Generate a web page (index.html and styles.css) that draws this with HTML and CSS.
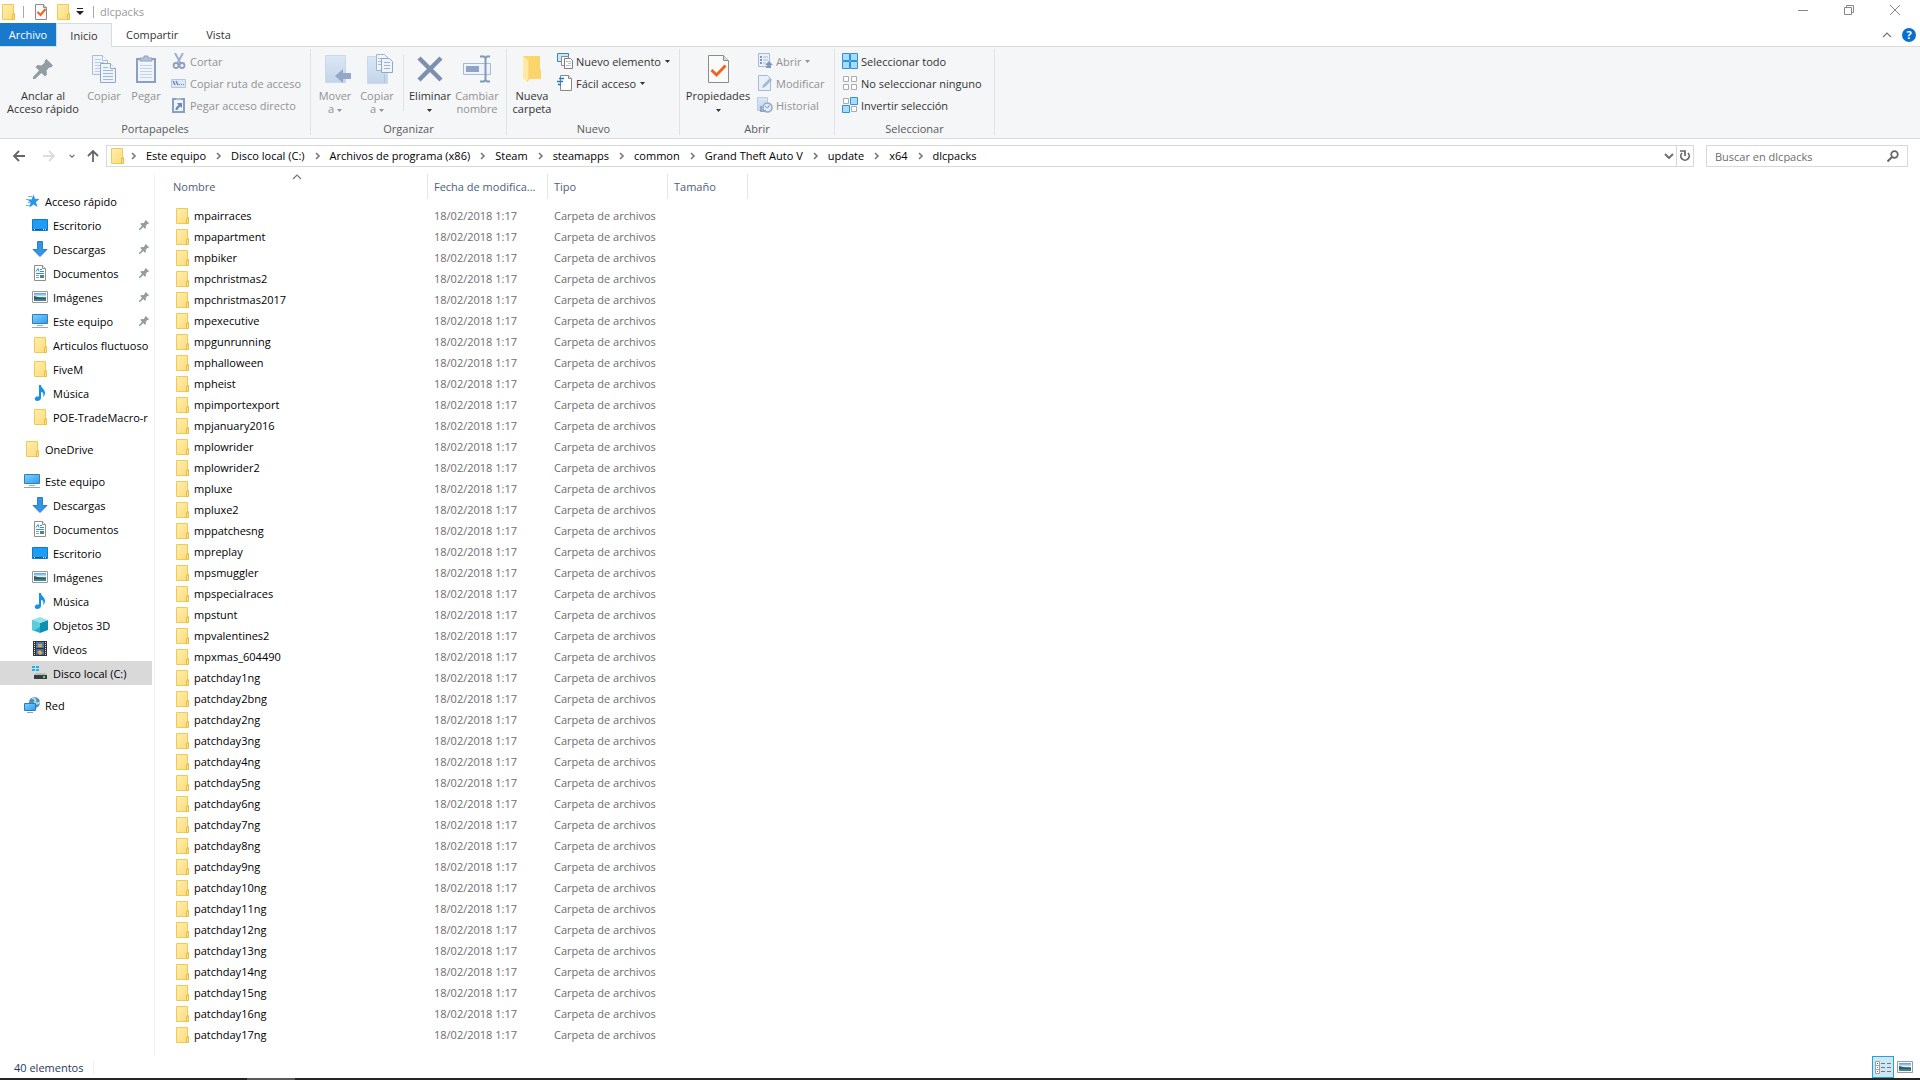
FILE: index.html
```html
<!DOCTYPE html>
<html lang="es">
<head>
  <meta charset="UTF-8">
  <title>dlcpacks</title>
  <link rel="stylesheet" href="styles.css">
</head>
<body>
<svg class="sprite" aria-hidden="true">
  <linearGradient id="g-folder" x1="0" y1="0" x2="1" y2="1"><stop offset="0" stop-color="#ffeeb0"/><stop offset="1" stop-color="#fcdc7c"/></linearGradient>
  <linearGradient id="g-screen" x1="0" y1="0" x2="1" y2="1"><stop offset="0" stop-color="#7cd0ff"/><stop offset="1" stop-color="#2b9df4"/></linearGradient>
  <linearGradient id="g-photo" x1="0" y1="0" x2="0" y2="1"><stop offset="0" stop-color="#4f9be8"/><stop offset=".45" stop-color="#e4f3fd"/><stop offset=".6" stop-color="#3c6b62"/><stop offset="1" stop-color="#4389b8"/></linearGradient>
  <linearGradient id="g-blue" x1="0" y1="0" x2="0" y2="1"><stop offset="0" stop-color="#dbe7f5"/><stop offset="1" stop-color="#c3d4ea"/></linearGradient>

  <symbol id="folder" viewBox="0 0 16 16">
    <path d="M2.5.5h11v15h-11z" fill="url(#g-folder)" stroke="#f0cb54"/>
    <path d="M12.5 15.5v-5h1v-1h1v6z" fill="#ffe494" stroke="#e8bd3f"/>
  </symbol>
  <symbol id="check" viewBox="0 0 12 16">
    <path d="M.5.5h8l3 3v12H.5z" fill="#fafafa" stroke="#8c8c8c"/><path d="M8.5.5v3h3" fill="#ddd" stroke="#8c8c8c"/>
    <path d="M2.500 8l3 3 5-6" fill="none" stroke="#f4601e" stroke-width="2"/>
  </symbol>
  <symbol id="props" viewBox="0 0 21 28">
    <path d="M.5.5h15l5 5v22H.5z" fill="#fafafa" stroke="#8c8c8c"/><path d="M15.5.5v5h5" fill="#ddd" stroke="#8c8c8c"/>
    <path d="M3.500 15l5 5 9-9.500" fill="none" stroke="#f4601e" stroke-width="2.800"/>
  </symbol>
  <symbol id="caret" viewBox="0 0 5 3"><path d="M0 0h5L2.500 3z" fill="currentColor"/></symbol>
  <symbol id="qat" viewBox="0 0 8 8"><path d="M1 0h6v1H1zM0 3h8L4 7z" fill="#222"/></symbol>
  <symbol id="chev" viewBox="0 0 6 8"><path d="M1 1l3 3-3 3" fill="none" stroke="#777" stroke-width="1.600"/></symbol>
  <symbol id="up" viewBox="0 0 10 6"><path d="M1 5l4-4 4 4" fill="none" stroke="#777" stroke-width="1.200"/></symbol>
  <symbol id="down" viewBox="0 0 10 6"><path d="M1 1l4 4 4-4" fill="none" stroke="#707070" stroke-width="2"/></symbol>
  <symbol id="arrow" viewBox="0 0 14 12"><path d="M13 6H2M7 1L2 6l5 5" fill="none" stroke="currentColor" stroke-width="1.800"/></symbol>

  <symbol id="pin" viewBox="0 0 20 20">
    <path d="M13.500 0L20 6.500 18 8.500l-1.500-.3-3 3.300.5 4-2 2-3.500-3.500L2 20H0v-2l6-6.500L2.500 8l2-2 4 .5 3.300-3-.3-1.500z" fill="#949ca3"/>
  </symbol>
  <symbol id="copy" viewBox="0 0 24 28">
    <path d="M.5.5h10l5 5v14H.5z" fill="#eef4fb" stroke="#abbcd4"/><path d="M10.5.5v5h5" fill="#fff" stroke="#abbcd4"/>
    <path d="M3 4.500h6M3 7.500h9M3 10.500h9M3 13.500h9M3 16.500h9" stroke="#bccbe0"/>
    <path d="M8.500 8.500h10l5 5v14h-15z" fill="#eef4fb" stroke="#92a7c6"/><path d="M18.500 8.500v5h5" fill="#fff" stroke="#92a7c6"/>
    <path d="M11 12.500h5M11 15.500h10M11 18.500h10M11 21.500h10M11 24.500h10" stroke="#a3b7d3"/>
  </symbol>
  <symbol id="paste" viewBox="0 0 20 28">
    <path d="M1 4h18v23H1z" fill="#eff5fb" stroke="#8a9fc4" stroke-width="2"/>
    <path d="M4 6V3h4V1h4v2h4v3z" fill="#b5c3d9" stroke="#8fa2c0"/>
    <path d="M4 10.500h12M4 13.500h12M4 16.500h12M4 19.500h12M4 22.500h12" stroke="#c3d1e5"/>
  </symbol>
  <symbol id="cut" viewBox="0 0 16 16">
    <path d="M4 0l5.500 10M12 0L6.500 10" stroke="#9fb0c9" stroke-width="2"/>
    <circle cx="5" cy="12.500" r="2.500" fill="none" stroke="#8c9fbe" stroke-width="1.800"/><circle cx="11" cy="12.500" r="2.500" fill="none" stroke="#8c9fbe" stroke-width="1.800"/>
  </symbol>
  <symbol id="path" viewBox="0 0 16 16">
    <path d="M.5 4.500h14v8H.5z" fill="#dce8f6" stroke="#b7c6dc"/><path d="M2 6l2 4M5 6l2 4" stroke="#6e87b1" stroke-width="1.400"/><path d="M8 9h1v1H8zM10 9h1v1h-1zM12 9h1v1h-1z" fill="#6e87b1"/>
  </symbol>
  <symbol id="shortcut" viewBox="0 0 16 16">
    <path d="M2 2h11v13H2z" fill="#eef4fb" stroke="#8a9fc4" stroke-width="2"/><path d="M5 3V1h5v2z" fill="#a9b9d2"/>
    <path d="M6 6h5v5L9.500 9.500C8 10.500 7 11.500 6.500 13h-2c0-2 1-3.500 3-5z" fill="#7189b4"/>
  </symbol>
  <symbol id="move" viewBox="-6 0 34 30">
    <path d="M1.500 1.500h20v27h-20z" fill="url(#g-blue)" stroke="#c9d8eb"/><path d="M18.500 28v-9" stroke="#b3c6df"/>
    <path d="M11 22l8-7v4h8v6h-8v4z" fill="#94a7c7"/>
  </symbol>
  <symbol id="copyto" viewBox="-6 0 34 32">
    <path d="M1.500 3.500h20v27h-20z" fill="url(#g-blue)" stroke="#c9d8eb"/><path d="M18.500 30v-9" stroke="#b3c6df"/>
    <path d="M10.500 1.500h8l3 3v13h-11z" fill="#eef4fb" stroke="#a3b5d0"/><path d="M12 5.500h6M12 8.500h6M12 11.500h6" stroke="#a9bbd5"/>
    <path d="M15.500 5.500h8l3 3v11h-11z" fill="#eef4fb" stroke="#93a7c6"/><path d="M18 9.500h6M18 12.500h6M18 15.500h6" stroke="#9fb3d0"/>
  </symbol>
  <symbol id="delete" viewBox="0 0 26 26"><path d="M2 2l22 22M24 2L2 24" stroke="#7d8fae" stroke-width="4.500"/></symbol>
  <symbol id="rename" viewBox="0 0 28 28">
    <path d="M.5 8.500h27v11H.5z" fill="#eef4fb" stroke="#a7b9d3"/><path d="M3 11h13v6H3z" fill="#8ea3c5"/>
    <path d="M17 1.500h4l1.500 1.500L24 1.500h3M17 26.500h4l1.500-1.500 1.500 1.500h3M22.500 3v22" fill="none" stroke="#8398bb" stroke-width="2"/>
  </symbol>
  <symbol id="newfolder" viewBox="0 0 20 28">
    <path d="M1 1h17v13l1 1v9H1z" fill="#fbd56a"/><path d="M1 1l6 5v20l-2 1-4-4z" fill="#ffe9a5"/><path d="M5 26l2-2V6" fill="none" stroke="#f4cf6a"/>
  </symbol>
  <symbol id="newitem" viewBox="0 0 16 16">
    <path d="M.5.5h11v8H.5z" fill="#cbe8fa" stroke="#3d87a9"/><path d="M4.500 3.500h7v9h-7z" fill="#fff" stroke="#8b8b8b"/>
    <path d="M7.500 5.500h6l2 2v8h-8z" fill="#fff" stroke="#7e7e7e"/><path d="M9 8.500h2M9 12.500h2" stroke="#f19999"/><path d="M11 8.500h3M11 10.500h3M11 12.500h3" stroke="#a6c7e7"/>
  </symbol>
  <symbol id="easy" viewBox="0 0 16 16">
    <path d="M3.500.5h8l3 3v12h-11z" fill="#fff" stroke="#888"/><path d="M11.500.5v3h3" fill="#eee" stroke="#888"/><path d="M2 3.500h5M0 6.500h6M1 9.500h3" stroke="#1e7ac6" stroke-width="1.400"/>
  </symbol>
  <symbol id="open" viewBox="0 0 16 16">
    <path d="M1.500.5h11v13h-11z" fill="#eaf1fa" stroke="#a9bad3"/><path d="M3 3h2v2H3zM3 6h2v2H3zM3 9h2v2H3z" fill="#7f95bd"/><path d="M6 4h5M6 7h5M6 10h3" stroke="#a9bad3"/>
    <path d="M8 12l4-4 4 4h-2v3H9v-2h1v-1z" fill="#8398bd"/>
  </symbol>
  <symbol id="edit" viewBox="0 0 16 16">
    <path d="M1.500.5h9l3 3v12h-12z" fill="#e8f0fa" stroke="#a9bad3"/><path d="M5 13l1-3 7-7 2 2-7 7z" fill="#a5b8d5"/>
  </symbol>
  <symbol id="history" viewBox="0 0 16 16">
    <path d="M.5.5h10v13H.5z" fill="url(#g-blue)" stroke="#bccde4"/><circle cx="10.500" cy="10.500" r="4.500" fill="#e2ebf7" stroke="#92a6c7" stroke-width="1.500"/>
    <path d="M8 9l2.500 2L13 7.500" fill="none" stroke="#8197bd"/><path d="M4 9v5h5" fill="none" stroke="#92a6c7" stroke-width="2"/>
  </symbol>
  <symbol id="selall" viewBox="0 0 16 16"><path d="M.5.5h7v7h-7zM8.5.5h7v7h-7zM.5 8.500h7v7h-7zM8.500 8.500h7v7h-7z" fill="#a9dcfb" stroke="#2d91e0"/></symbol>
  <symbol id="selnone" viewBox="0 0 16 16"><path d="M1.500 1.500h5v5h-5zM9.500 1.500h5v5h-5zM1.500 9.500h5v5h-5zM9.500 9.500h5v5h-5z" fill="#fff" stroke="#aaa"/></symbol>
  <symbol id="selinv" viewBox="0 0 16 16"><path d="M1.500 1.500h5v5h-5zM9.500 9.500h5v5h-5z" fill="#fff" stroke="#aaa"/><path d="M8.5.5h7v7h-7zM.5 8.500h7v7h-7z" fill="#a9dcfb" stroke="#2d91e0"/></symbol>

  <symbol id="star" viewBox="0 0 16 16">
    <path d="M9.500 1.500l1.500 4.200 4.500.3-3.500 3 1.500 5-4-2.500-4 3 1-5-3-3h4z" fill="#2d97e5"/><path d="M4 3.500h4M2 6.500h4M4 9.500h3M2 12.500h4" stroke="#69b9f0"/>
  </symbol>
  <symbol id="desktop" viewBox="0 0 16 16"><path d="M.5 2.500h15v11H.5z" fill="#1c9dfa" stroke="#1479c4"/><path d="M1 12.500h14" stroke="#12588f"/><path d="M2 12.500h1M11 12.500h1M13 12.500h1" stroke="#fff"/></symbol>
  <symbol id="downloads" viewBox="0 0 16 16"><path d="M5.5.5h5v8h4.500L8 15.500 1 8.500h4.500z" fill="#3393e6" stroke="#2b80cd"/></symbol>
  <symbol id="docs" viewBox="0 0 16 16">
    <path d="M2.5.5h8l3 3v12h-11z" fill="#fff" stroke="#8f8f8f"/><path d="M10.5.5v3h3" fill="#eee" stroke="#8f8f8f"/>
    <path d="M4 6.500l2-3 1 3M8 4.500h2M8 6.500h4M4 8.500h8" fill="none" stroke="#3291d8"/><path d="M4 10.500h3M4 12.500h3" stroke="#999"/><path d="M8 10h4v3H8z" fill="#4683a1"/>
  </symbol>
  <symbol id="images" viewBox="0 0 16 16"><path d="M.5 2.500h15v11H.5z" fill="#fff" stroke="#9a9a9a"/><path d="M2 4h12v8H2z" fill="url(#g-photo)"/><path d="M2 7c4 1 7 2 12 2v1H2z" fill="#2f5e50"/></symbol>
  <symbol id="pc" viewBox="0 0 16 16"><path d="M.5 1.500h15v9H.5z" fill="url(#g-screen)" stroke="#3b7da9"/><path d="M5 12.500h6" stroke="#8bb4cd"/><path d="M0 14.500h16" stroke="#99a5b3"/></symbol>
  <symbol id="music" viewBox="0 0 16 16"><path d="M7 0h2c0 3 4 4 4 8 0 2-1 3-2 4 1-3 0-5-2-5v6c0 2-2 3-4 3-3 0-3-4 0-4.500 1-.2 2 0 2 0z" fill="#1593ea"/></symbol>
  <symbol id="cube" viewBox="0 0 16 16"><path d="M0 3l8 3v10l-8-3z" fill="#21b1c7"/><path d="M16 3L8 6v10l8-3z" fill="#0f90b1"/><path d="M0 3l8-3 8 3-8 3z" fill="#92e3ec"/><path d="M0 3l8 3v4l-6 3.500-2-.5z" fill="#5cccdb"/></symbol>
  <symbol id="video" viewBox="0 0 16 16"><path d="M1 0h14v15H1z" fill="#303030"/><path d="M4 1h8v6H4z" fill="#5274ba"/><path d="M4 8h8v6H4z" fill="#3e66b2"/><path d="M6 3h4v3H6z" fill="#d8a935"/><path d="M5 11l3-2 3 3-3 2z" fill="#dbb23d"/><path d="M2.500 1v14M13.500 1v14" stroke="#eee" stroke-dasharray="1 1"/></symbol>
  <symbol id="drive" viewBox="0 0 16 16"><path d="M0 1h3v2H0zM4 1h3v2H4zM0 4h3v2H0zM4 4h3v2H4z" fill="#19b3ea"/><path d="M4 8h9l2 2H2z" fill="#b9bcbd"/><path d="M2 10h13v4H2z" fill="#393c3e"/><path d="M11 11h2v2h-2z" fill="#4be36a"/></symbol>
  <symbol id="net" viewBox="0 0 16 16"><circle cx="10.500" cy="5.500" r="5.500" fill="#4f91b8"/><path d="M8 1c3 0 4 2 3 4s3 2 5 0" fill="none" stroke="#b5d9e6" stroke-width="2"/><path d="M.5 6.500h11v7H.5z" fill="url(#g-screen)" stroke="#2c7cb6"/><path d="M3 15.500h6" stroke="#8fa5b5"/></symbol>
</svg>

<header class="titlebar">
  <svg class="icon"><use href="#folder"/></svg>
  <span class="bar"></span>
  <button class="qat-btn" aria-label="Propiedades"><svg width="12" height="16"><use href="#check"/></svg></button>
  <button class="qat-btn" aria-label="Nueva carpeta"><svg class="icon"><use href="#folder"/></svg></button>
  <button class="qat-btn qat-more" aria-label="Personalizar"><svg width="8" height="8"><use href="#qat"/></svg></button>
  <span class="bar"></span>
  <h1>dlcpacks</h1>
  <div class="window-btns">
    <button aria-label="Minimizar"><svg width="10" height="10"><path d="M0 5.500h10" stroke="#888"/></svg></button>
    <button aria-label="Restaurar"><svg width="10" height="10"><path d="M.5 2.500h7v7h-7zM2.500 2V.5h7v7H8" fill="none" stroke="#888"/></svg></button>
    <button aria-label="Cerrar"><svg width="10" height="10"><path d="M0 0l10 10M10 0L0 10" stroke="#888"/></svg></button>
  </div>
</header>

<nav class="tabs">
  <button class="tab tab-file">Archivo</button>
  <button class="tab active">Inicio</button>
  <button class="tab">Compartir</button>
  <button class="tab">Vista</button>
  <div class="tab-tools">
    <button aria-label="Minimizar la cinta"><svg width="10" height="6"><use href="#up"/></svg></button>
    <button class="help">?</button>
  </div>
</nav>

<section class="ribbon">
  <div class="group g-clipboard">
    <div class="tools">
      <button class="big pin-btn"><svg width="20" height="20"><use href="#pin"/></svg><span>Anclar al<br>Acceso rápido</span></button>
      <button class="big" disabled><svg width="24" height="28"><use href="#copy"/></svg><span>Copiar</span></button>
      <button class="big" disabled><svg width="20" height="28"><use href="#paste"/></svg><span>Pegar</span></button>
      <div class="stack">
        <button disabled><svg class="icon"><use href="#cut"/></svg>Cortar</button>
        <button disabled><svg class="icon"><use href="#path"/></svg>Copiar ruta de acceso</button>
        <button disabled><svg class="icon"><use href="#shortcut"/></svg>Pegar acceso directo</button>
      </div>
    </div>
    <h2>Portapapeles</h2>
  </div>
  <div class="group g-organize">
    <div class="tools">
      <button class="big" disabled><svg width="34" height="30"><use href="#move"/></svg><span>Mover<br>a <svg class="caret"><use href="#caret"/></svg></span></button>
      <button class="big" disabled><svg width="34" height="32"><use href="#copyto"/></svg><span>Copiar<br>a <svg class="caret"><use href="#caret"/></svg></span></button>
      <i class="divider"></i>
      <button class="big"><svg width="26" height="26"><use href="#delete"/></svg><span>Eliminar<br><svg class="caret"><use href="#caret"/></svg></span></button>
      <button class="big wide" disabled><svg width="28" height="28"><use href="#rename"/></svg><span>Cambiar<br>nombre</span></button>
    </div>
    <h2>Organizar</h2>
  </div>
  <div class="group g-new">
    <div class="tools">
      <button class="big"><svg width="20" height="28"><use href="#newfolder"/></svg><span>Nueva<br>carpeta</span></button>
      <div class="stack">
        <button><svg class="icon"><use href="#newitem"/></svg>Nuevo elemento<svg class="caret"><use href="#caret"/></svg></button>
        <button><svg class="icon"><use href="#easy"/></svg>Fácil acceso<svg class="caret"><use href="#caret"/></svg></button>
      </div>
    </div>
    <h2>Nuevo</h2>
  </div>
  <div class="group g-open">
    <div class="tools">
      <button class="big props-btn"><svg width="21" height="28"><use href="#props"/></svg><span>Propiedades<br><svg class="caret"><use href="#caret"/></svg></span></button>
      <div class="stack">
        <button disabled><svg class="icon"><use href="#open"/></svg>Abrir<svg class="caret"><use href="#caret"/></svg></button>
        <button disabled><svg class="icon"><use href="#edit"/></svg>Modificar</button>
        <button disabled><svg class="icon"><use href="#history"/></svg>Historial</button>
      </div>
    </div>
    <h2>Abrir</h2>
  </div>
  <div class="group g-select">
    <div class="tools">
      <div class="stack">
        <button><svg class="icon"><use href="#selall"/></svg>Seleccionar todo</button>
        <button><svg class="icon"><use href="#selnone"/></svg>No seleccionar ninguno</button>
        <button><svg class="icon"><use href="#selinv"/></svg>Invertir selección</button>
      </div>
    </div>
    <h2>Seleccionar</h2>
  </div>
</section>

<div class="address-row">
  <div class="nav-btns">
    <button class="nav-btn" aria-label="Atrás"><svg width="14" height="12"><use href="#arrow"/></svg></button>
    <button class="nav-btn" aria-label="Adelante" disabled><svg class="flip" width="14" height="12"><use href="#arrow"/></svg></button>
    <button class="nav-small" aria-label="Recientes"><svg width="6" height="4"><use href="#down"/></svg></button>
    <button class="nav-up" aria-label="Subir"><svg class="turn" width="14" height="12"><use href="#arrow"/></svg></button>
  </div>
  <div class="address">
    <svg class="icon"><use href="#folder"/></svg>
    <div class="crumbs" id="crumbs"></div>
    <button class="addr-drop" aria-label="Ubicaciones anteriores"><svg width="10" height="6"><use href="#down"/></svg></button>
    <button class="refresh" aria-label="Actualizar"><svg width="12" height="12"><path d="M3 3a4.200 4.200 0 1 0 6 0" fill="none" stroke="#666" stroke-width="1.700"/><path d="M1 1h5v5" fill="none" stroke="#666" stroke-width="1.700"/></svg></button>
  </div>
  <label class="search">
    <input type="text" placeholder="Buscar en dlcpacks" aria-label="Buscar en dlcpacks">
    <svg width="12" height="12"><circle cx="7.500" cy="4.500" r="3.300" fill="none" stroke="#666" stroke-width="1.700"/><path d="M5 7l-4.500 4.500" stroke="#666" stroke-width="2"/></svg>
  </label>
</div>

<main>
  <aside class="sidebar">
    <ul>
      <li><a class="root" href="#"><svg class="icon"><use href="#star"/></svg><span>Acceso rápido</span></a></li>
      <li><a href="#"><svg class="icon"><use href="#desktop"/></svg><span>Escritorio</span><svg class="pin"><use href="#pin"/></svg></a></li>
      <li><a href="#"><svg class="icon"><use href="#downloads"/></svg><span>Descargas</span><svg class="pin"><use href="#pin"/></svg></a></li>
      <li><a href="#"><svg class="icon"><use href="#docs"/></svg><span>Documentos</span><svg class="pin"><use href="#pin"/></svg></a></li>
      <li><a href="#"><svg class="icon"><use href="#images"/></svg><span>Imágenes</span><svg class="pin"><use href="#pin"/></svg></a></li>
      <li><a href="#"><svg class="icon"><use href="#pc"/></svg><span>Este equipo</span><svg class="pin"><use href="#pin"/></svg></a></li>
      <li><a href="#"><svg class="icon"><use href="#folder"/></svg><span>Articulos fluctuoso</span></a></li>
      <li><a href="#"><svg class="icon"><use href="#folder"/></svg><span>FiveM</span></a></li>
      <li><a href="#"><svg class="icon"><use href="#music"/></svg><span>Música</span></a></li>
      <li><a href="#"><svg class="icon"><use href="#folder"/></svg><span>POE-TradeMacro-r</span></a></li>
    </ul>
    <ul>
      <li><a class="root" href="#"><svg class="icon"><use href="#folder"/></svg><span>OneDrive</span></a></li>
    </ul>
    <ul>
      <li><a class="root" href="#"><svg class="icon"><use href="#pc"/></svg><span>Este equipo</span></a></li>
      <li><a href="#"><svg class="icon"><use href="#downloads"/></svg><span>Descargas</span></a></li>
      <li><a href="#"><svg class="icon"><use href="#docs"/></svg><span>Documentos</span></a></li>
      <li><a href="#"><svg class="icon"><use href="#desktop"/></svg><span>Escritorio</span></a></li>
      <li><a href="#"><svg class="icon"><use href="#images"/></svg><span>Imágenes</span></a></li>
      <li><a href="#"><svg class="icon"><use href="#music"/></svg><span>Música</span></a></li>
      <li><a href="#"><svg class="icon"><use href="#cube"/></svg><span>Objetos 3D</span></a></li>
      <li><a href="#"><svg class="icon"><use href="#video"/></svg><span>Vídeos</span></a></li>
      <li><a class="selected" href="#"><svg class="icon"><use href="#drive"/></svg><span>Disco local (C:)</span></a></li>
    </ul>
    <ul>
      <li><a class="root" href="#"><svg class="icon"><use href="#net"/></svg><span>Red</span></a></li>
    </ul>
  </aside>

  <div class="files">
    <table>
      <colgroup><col class="c-name"><col class="c-date"><col class="c-type"><col class="c-size"></colgroup>
      <thead>
        <tr>
          <th>Nombre<svg class="sort" width="10" height="6"><use href="#up"/></svg></th>
          <th>Fecha de modifica...</th>
          <th>Tipo</th>
          <th>Tamaño</th>
        </tr>
      </thead>
      <tbody id="rows"></tbody>
    </table>
  </div>
</main>

<footer class="status">
  <span class="count">40 elementos</span>
  <div class="views">
    <button class="active" aria-label="Detalles"><svg width="16" height="13"><path d="M.5.5h4v4h-4zM.5 4.500h4v4h-4zM.5 8.500h4v4h-4z" fill="#fff" stroke="#a0a0a0"/><path d="M6 2.500h4M12 2.500h4M6 6.500h4M12 6.500h4M6 10.500h4M12 10.500h4" stroke="#777"/><path d="M2 2h1v1H2z" fill="#555"/><path d="M2 6h1v1H2z" fill="#48f"/><path d="M2 10h1v1H2z" fill="#c33"/></svg></button>
    <button aria-label="Iconos grandes"><svg width="16" height="16"><use href="#images"/></svg></button>
  </div>
</footer>
<div class="taskbar"><span></span></div>

<script>
  const crumbs = ['Este equipo', 'Disco local (C:)', 'Archivos de programa (x86)', 'Steam', 'steamapps',
    'common', 'Grand Theft Auto V', 'update', 'x64', 'dlcpacks'];
  const names = ['mpairraces', 'mpapartment', 'mpbiker', 'mpchristmas2', 'mpchristmas2017', 'mpexecutive',
    'mpgunrunning', 'mphalloween', 'mpheist', 'mpimportexport', 'mpjanuary2016', 'mplowrider', 'mplowrider2',
    'mpluxe', 'mpluxe2', 'mppatchesng', 'mpreplay', 'mpsmuggler', 'mpspecialraces', 'mpstunt', 'mpvalentines2',
    'mpxmas_604490', 'patchday1ng', 'patchday2bng'];
  for (let i = 2; i <= 17; i++) names.push('patchday' + i + 'ng');

  document.getElementById('crumbs').innerHTML = crumbs.map(c =>
    `<svg class="chev"><use href="#chev"/></svg><a href="#">${c}</a>`).join('');

  document.getElementById('rows').innerHTML = names.map(n => `
    <tr>
      <td><a class="file" href="#"><svg class="icon"><use href="#folder"/></svg>${n}</a></td>
      <td>18/02/2018 1:17</td>
      <td>Carpeta de archivos</td>
      <td></td>
    </tr>`).join('');
</script>
</body>
</html>
```
FILE: styles.css
```css
* {
  box-sizing: border-box;
}
body {
  margin: 0;
  min-height: 100vh;
  display: flex;
  flex-direction: column;
  background: #fff;
  color: #000;
  font-family: "Open Sans", "Noto Sans", sans-serif;
  font-size: 11px;
  line-height: 13px;
}
button, input {
  font: inherit;
  color: inherit;
  background: none;
  border: 0;
  padding: 0;
  margin: 0;
}
h1, h2 {
  margin: 0;
  font-size: 11px;
  font-weight: normal;
}
a {
  color: inherit;
  text-decoration: none;
}
ul {
  list-style: none;
  margin: 0;
  padding: 0;
}
svg {
  display: block;
  flex-shrink: 0;
}
.sprite {
  position: absolute;
  width: 0;
  height: 0;
}
.icon {
  width: 16px;
  height: 16px;
}
.caret {
  width: 5px;
  height: 3px;
}

/* title bar */
.titlebar {
  display: flex;
  align-items: center;
  height: 23px;
}
.bar {
  width: 1px;
  height: 12px;
  margin: 0 6px 0 7px;
  background: #aaa;
}
.qat-btn {
  display: flex;
  justify-content: center;
  width: 22px;
}
.qat-more {
  width: 12px;
}
.titlebar h1 {
  color: #999;
}
.window-btns {
  display: flex;
  align-self: flex-start;
  margin-left: auto;
  padding-right: 2px;
}
.window-btns button {
  display: flex;
  align-items: center;
  justify-content: center;
  width: 46px;
  height: 20px;
}

/* tabs */
.tabs {
  display: flex;
  height: 24px;
  border-bottom: 1px solid #dadbdc;
  color: #333;
}
.tab {
  padding: 0 14px;
}
.tab-file {
  width: 56px;
  padding: 0;
  background: #1979ca;
  color: #fff;
}
.tab.active {
  width: 56px;
  height: 24px;
  padding: 0;
  background: #f5f6f7;
  border: 1px solid #dadbdc;
  border-bottom: 0;
}
.tab-tools {
  display: flex;
  align-items: center;
  gap: 10px;
  margin-left: auto;
  padding-right: 4px;
}
.help {
  width: 14px;
  height: 14px;
  border-radius: 50%;
  background: #0b6fd0;
  color: #fff;
  font-weight: bold;
}

/* ribbon */
.ribbon {
  display: flex;
  height: 92px;
  padding: 2px 0 3px;
  background: #f5f6f7;
  border-bottom: 1px solid #dadbdc;
  color: #333;
}
.group {
  display: flex;
  flex-direction: column;
  justify-content: space-between;
  padding: 0 3px;
  border-right: 1px solid #e1e2e3;
}
.group h2 {
  color: #5a5a5a;
  text-align: center;
}
.g-clipboard { width: 311px; }
.g-organize { width: 196px; }
.g-new {
  width: 173px;
  padding-left: 4px;
}
.g-open { width: 155px; }
.g-select { width: 160px; }
.tools {
  display: flex;
}
.big {
  display: flex;
  flex-direction: column;
  align-items: center;
  width: 42px;
  height: 68px;
  white-space: nowrap;
}
.big > svg {
  margin: auto;
}
.big > span {
  height: 28px;
}
.big .caret {
  display: inline-block;
  vertical-align: middle;
}
.wide { width: 52px; }
.pin-btn { width: 80px; }
.props-btn { width: 70px; }
button:disabled {
  color: #929292;
}
.divider {
  width: 1px;
  height: 56px;
  margin: 6px 5px 0;
  background: #e1e2e3;
}
.stack {
  display: flex;
  flex-direction: column;
  padding: 1px 0 0 4px;
}
.stack button {
  display: flex;
  align-items: center;
  gap: 3px;
  height: 22px;
  white-space: nowrap;
}
.stack .caret {
  margin-left: 1px;
}

/* address */
.address-row {
  display: flex;
  align-items: center;
  height: 34px;
  padding-right: 12px;
}
.nav-btns {
  display: flex;
  align-items: center;
  width: 106px;
  padding-left: 4px;
  color: #666;
}
.nav-btns button {
  display: flex;
  justify-content: center;
}
.nav-btn { width: 30px; }
.nav-small { width: 16px; }
.nav-up { width: 26px; }
.nav-btns button:disabled { color: #ddd; }
.flip { transform: scaleX(-1); }
.turn { transform: rotate(90deg); }
.address, .search {
  display: flex;
  align-items: center;
  height: 22px;
  border: 1px solid #d9d9d9;
}
.address {
  flex: 1;
  padding-left: 2px;
}
.crumbs {
  display: flex;
  align-items: center;
  flex: 1;
  padding-bottom: 1px;
}
.chev {
  width: 6px;
  height: 8px;
  margin: 0 9px 0 10px;
}
.chev:first-child {
  margin-left: 6px;
}
.addr-drop {
  padding: 0 2px;
}
.refresh {
  display: flex;
  align-items: center;
  justify-content: center;
  width: 17px;
  height: 20px;
  border-left: 1px solid #d9d9d9;
}
.search {
  width: 202px;
  margin-left: 12px;
  padding: 0 8px;
}
.search input {
  flex: 1;
  min-width: 0;
  outline: none;
}
.search input::placeholder {
  color: #6d6d6d;
  opacity: 1;
}

/* content */
main {
  display: flex;
  flex: 1;
}
.sidebar {
  width: 155px;
  margin-top: 1px;
  padding: 15px 2px 0 0;
  border-right: 1px solid #f2f2f2;
}
.sidebar ul {
  margin-bottom: 8px;
}
.sidebar a {
  display: flex;
  align-items: center;
  gap: 5px;
  height: 24px;
  padding-left: 32px;
  overflow: hidden;
  white-space: nowrap;
}
.sidebar .root {
  padding-left: 24px;
}
.sidebar .selected {
  background: #d9d9d9;
}
.sidebar .pin {
  width: 10px;
  height: 10px;
  margin-left: auto;
  margin-right: 3px;
}
.files {
  flex: 1;
  padding: 1px 0 0 12px;
}
table {
  width: 581px;
  table-layout: fixed;
  border-spacing: 0;
}
.c-name { width: 261px; }
.c-date { width: 120px; }
.c-type { width: 120px; }
.c-size { width: 80px; }
th {
  position: relative;
  height: 25px;
  padding: 0 0 0 6px;
  border-right: 1px solid #e5e5e5;
  color: #4c607a;
  font-weight: normal;
  text-align: left;
  white-space: nowrap;
}
.sort {
  position: absolute;
  top: 0;
  left: 50%;
  margin-left: -5px;
}
tbody::before {
  content: "";
  display: block;
  height: 6px;
}
td {
  height: 21px;
  padding: 0 0 0 6px;
  color: #6d6d6d;
  white-space: nowrap;
}
.file {
  display: flex;
  align-items: center;
  gap: 4px;
  padding-left: 1px;
  color: #000;
}

/* status bar */
.status {
  display: flex;
  align-items: center;
  height: 22px;
  padding: 0 4px 0 14px;
}
.count {
  padding-right: 10px;
  border-right: 1px solid #f0f0f0;
  color: #1e395b;
}
.views {
  display: flex;
  margin-left: auto;
}
.views button {
  display: flex;
  align-items: center;
  justify-content: center;
  width: 22px;
  height: 22px;
}
.views .active {
  background: #cce8f6;
  border: 1px solid #26a0da;
}
.taskbar {
  height: 2px;
  background: #242424;
}
.taskbar span {
  display: block;
  width: 48px;
  height: 2px;
  margin-left: 247px;
  background: #5a5a5a;
}
```
